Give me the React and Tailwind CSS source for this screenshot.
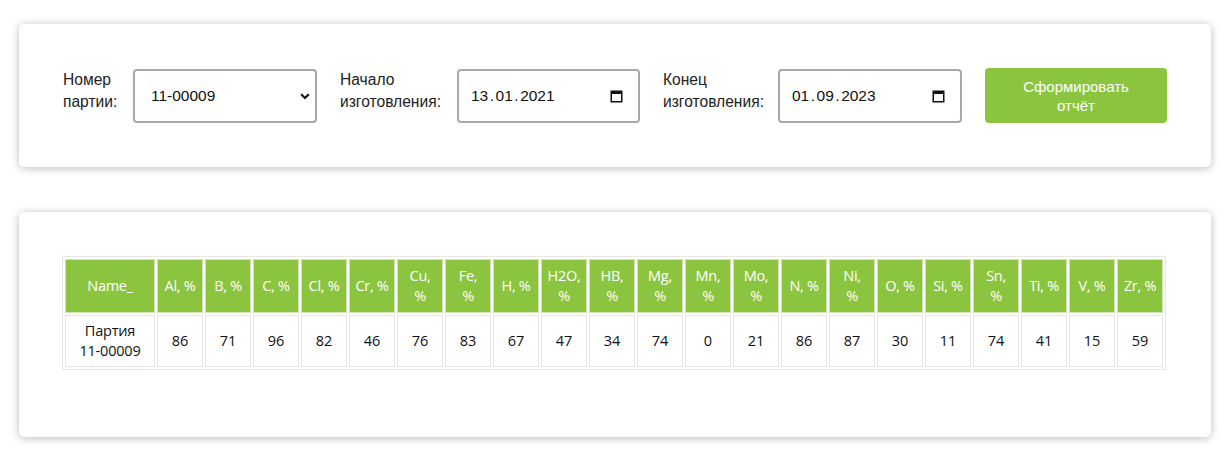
import React from "react";

const heads = [
  ["Al, %", false], ["B, %", false], ["C, %", false], ["Cl, %", false], ["Cr, %", false],
  ["Cu,", true], ["Fe,", true], ["H, %", false], ["H2O,", true], ["HB,", true],
  ["Mg,", true], ["Mn,", true], ["Mo,", true], ["N, %", false], ["Ni,", true],
  ["O, %", false], ["Si, %", false], ["Sn,", true], ["Ti, %", false], ["V, %", false], ["Zr, %", false],
];
const vals = [86, 71, 96, 82, 46, 76, 83, 67, 47, 34, 74, 0, 21, 86, 87, 30, 11, 74, 41, 15, 59];

function CalendarIcon() {
  return (
    <svg width="13" height="14" viewBox="0 0 13 14" className="shrink-0">
      <path fillRule="evenodd" fill="#111" d="M0.5 1.5h12v12h-12zM2 5v7h9V5z" />
    </svg>
  );
}

function Label({ l1, l2, w }) {
  return (
    <div className={`${w} self-start pt-[1px] text-[15.6px] leading-[22px] text-[#222] shrink-0`}>
      <div>{l1}</div>
      <div>{l2}</div>
    </div>
  );
}

function DateBox({ d, m, y, w }) {
  return (
    <div className={`${w} h-[54px] border-2 border-[#a8a8a8] rounded-[4px] flex items-center pl-[12px] pr-[15px] justify-between shrink-0`}>
      <span className="text-[15.5px] text-[#111]">
        {d}<span className="mx-[1.5px]">.</span>{m}<span className="mx-[1.5px]">.</span>{y}
      </span>
      <CalendarIcon />
    </div>
  );
}

export default function App() {
  return (
    <div className="bg-white min-h-[460px] pt-[24px] pl-[19px]" style={{ fontFamily: '"Liberation Sans", Arial, sans-serif' }}>
      <div className="w-[1192px] bg-white rounded-[5px] shadow-[0_1px_9px_rgba(0,0,0,0.28)] px-[44px] py-[44px] flex items-center">
        <Label l1="Номер" l2="партии:" w="w-[70px]" />
        <div className="relative w-[184px] h-[54px] shrink-0">
          <select className="appearance-none w-full h-full border-2 border-[#a8a8a8] rounded-[4px] pl-[16px] text-[15.5px] text-[#111] bg-white outline-none">
            <option>11-00009</option>
          </select>
          <svg className="absolute right-[7px] top-[24px] pointer-events-none" width="10" height="7" viewBox="0 0 10 7">
            <path d="M1.2 1.2L5 5L8.8 1.2" fill="none" stroke="#111" strokeWidth="2.2" />
          </svg>
        </div>
        <div className="w-[23px] shrink-0" />
        <Label l1="Начало" l2="изготовления:" w="w-[117px]" />
        <DateBox d="13" m="01" y="2021" w="w-[183px]" />
        <div className="w-[23px] shrink-0" />
        <Label l1="Конец" l2="изготовления:" w="w-[115px]" />
        <DateBox d="01" m="09" y="2023" w="w-[184px]" />
        <div className="w-[23px] shrink-0" />
        <button className="w-[182px] h-[55px] shrink-0 rounded-[4px] bg-[#8bc540] text-white text-[15px] leading-[19px] flex flex-col items-center justify-center">
          <span>Сформировать</span>
          <span>отчёт</span>
        </button>
      </div>

      <div className="mt-[45px] w-[1192px] bg-white rounded-[5px] shadow-[0_1px_9px_rgba(0,0,0,0.28)] pl-[43px] pt-[44px] pb-[67px]">
        <table
          className="table-fixed w-[1104px] border border-[#e6e6e6] border-separate border-spacing-[2px] text-center"
          style={{ fontFamily: '"Open Sans", "Noto Sans", sans-serif' }}
        >
          <colgroup>
            <col className="w-[90px]" />
            {heads.map((_, i) => (
              <col key={i} className="w-[46px]" />
            ))}
          </colgroup>
          <thead>
            <tr>
              <th className="h-[54px] p-0 bg-[#8bc540] border border-[#cfe6b3] text-white font-normal text-[14.5px] leading-[20px] tracking-[-0.3px]">Name_</th>
              {heads.map(([h, wrap], i) => (
                <th key={i} className="h-[54px] p-0 bg-[#8bc540] border border-[#cfe6b3] text-white font-normal text-[14.5px] leading-[20px] whitespace-nowrap tracking-[-0.3px]">
                  {wrap ? (<>{h}<br />%</>) : h}
                </th>
              ))}
            </tr>
          </thead>
          <tbody>
            <tr>
              <td className="h-[52px] p-0 border border-[#e6e6e6] text-[#111] text-[14.5px] leading-[20px] tracking-[-0.2px]">
                Партия<br />11-00009
              </td>
              {vals.map((v, i) => (
                <td key={i} className="h-[52px] p-0 border border-[#e6e6e6] text-[#111] text-[14.5px] leading-[20px]">
                  {v}
                </td>
              ))}
            </tr>
          </tbody>
        </table>
      </div>
    </div>
  );
}
